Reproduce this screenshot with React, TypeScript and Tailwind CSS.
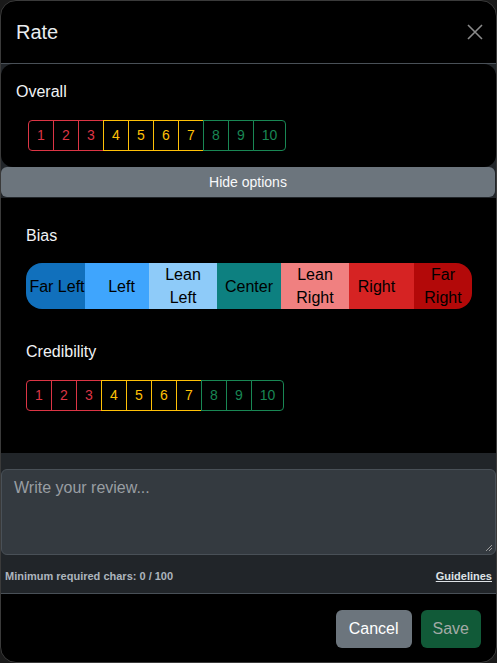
import React from "react";

const nums = [1, 2, 3, 4, 5, 6, 7, 8, 9, 10];

function colorFor(n: number) {
  if (n <= 3) return "border-[#dc3545] text-[#dc3545]";
  if (n <= 7) return "border-[#ffc107] text-[#ffc107]";
  return "border-[#198754] text-[#198754]";
}

function RatingGroup() {
  return (
    <div className="flex">
      {nums.map((n, i) => (
        <div
          key={n}
          className={
            "h-[31px] flex items-center justify-center border text-[14px] bg-black " +
            colorFor(n) +
            (i === 0 ? " w-[26px] rounded-l-[4px]" : " -ml-px") +
            (i > 0 && i < 9 ? " w-[26px]" : "") +
            (i === 9 ? " w-[33px] rounded-r-[4px]" : "")
          }
        >
          {n}
        </div>
      ))}
    </div>
  );
}

const bias = [
  { label: "Far Left", bg: "bg-[#1170bc]", w: "w-[59px]", extra: "rounded-l-[16px] pl-[3px]" },
  { label: "Left", bg: "bg-[#3fa5fd]", w: "w-[64px]", extra: "pl-[9px]" },
  { label: "Lean Left", bg: "bg-[#8ecbf9]", w: "w-[68px]", extra: "px-[3px]" },
  { label: "Center", bg: "bg-[#0d8080]", w: "w-[64px]", extra: "px-[2px]" },
  { label: "Lean Right", bg: "bg-[#f08080]", w: "w-[68px]", extra: "px-[3px]" },
  { label: "Right", bg: "bg-[#d62323]", w: "w-[65px]", extra: "pr-[10px]" },
  { label: "Far Right", bg: "bg-[#b30909]", w: "w-[58px]", extra: "rounded-r-[16px] px-[3px]" },
];

export default function App() {
  return (
    <div className="w-[497px] h-[663px] bg-[#1a1a1a]">
      <div className="w-[497px] h-[663px] bg-black border border-[#3a3a3a] rounded-[16px] overflow-hidden flex flex-col font-['Liberation_Sans',Arial,sans-serif] text-white">
        {/* Header */}
        <div className="h-[63px] shrink-0 flex items-center justify-between pl-[15px] pr-[13px] border-b border-[#495057]">
          <div className="text-[20px] leading-[24px] text-[#e9ecef]">Rate</div>
          <svg width="16" height="16" viewBox="0 0 16 16" className="text-[#8a8a8a]">
            <path d="M1 1 L15 15 M15 1 L1 15" stroke="currentColor" strokeWidth="1.6" />
          </svg>
        </div>

        {/* Overall + Hide */}
        <div className="bg-[#212529] shrink-0 pb-[1px]">
          <div className="bg-black rounded-[12px] h-[103px] pl-[15px] pt-[16px]">
            <div className="text-[16px] leading-[24px] text-[#f1f3f5]">Overall</div>
            <div className="mt-[16px] pl-[12px]">
              <RatingGroup />
            </div>
          </div>
          <div className="h-[30px] bg-[#6c757d] rounded-[6px] mr-[1px] flex items-center justify-center text-[14px] text-[#f8f9fa] font-medium">
            Hide options
          </div>
        </div>

        {/* Bias & Credibility */}
        <div className="bg-black px-[25px] pt-[26px] h-[255px] shrink-0">
          <div className="text-[16px] leading-[24px] text-[#f1f3f5]">Bias</div>
          <div className="mt-[15px] flex h-[46px] w-[446px]">
            {bias.map((b) => (
              <div
                key={b.label}
                className={
                  "flex items-center justify-center text-center text-black text-[16px] leading-[23px] " +
                  b.bg + " " + b.w + " " + b.extra
                }
              >
                {b.label}
              </div>
            ))}
          </div>
          <div className="mt-[31px] text-[16px] leading-[24px] text-[#f1f3f5]">Credibility</div>
          <div className="mt-[16px]">
            <RatingGroup />
          </div>
        </div>

        {/* Review */}
        <div className="bg-[#212529] pt-[16px] border-b border-[#495057] shrink-0">
          <div className="h-[86px] mx-0 bg-[#343a40] border border-[#495057] rounded-[6px] px-[12px] pt-[6px] relative">
            <div className="text-[16px] leading-[24px] text-[#999ea3]">Write your review...</div>
            <svg width="8" height="8" viewBox="0 0 8 8" className="absolute right-[2px] bottom-[2px] text-[#9a9a9a]">
              <path d="M7 1 L1 7 M7 4 L4 7" stroke="currentColor" strokeWidth="1" />
            </svg>
          </div>
          <div className="h-[38px] flex items-center justify-between px-[4px] pt-[12px] pb-[8px] text-[11px] font-bold">
            <span className="text-[#adb5bd]">Minimum required chars: 0 / 100</span>
            <span className="text-[#dee2e6] underline">Guidelines</span>
          </div>
        </div>

        {/* Footer */}
        <div className="flex-1 flex justify-end items-start gap-[9px] pt-[16px] pr-[15px]">
          <div className="h-[38px] px-[13px] rounded-[6px] bg-[#6c757d] text-white text-[16px] flex items-center">
            Cancel
          </div>
          <div className="h-[38px] px-[12px] rounded-[6px] bg-[#115a38] text-[#a3aaa6] text-[16px] flex items-center">
            Save
          </div>
        </div>
      </div>
    </div>
  );
}
